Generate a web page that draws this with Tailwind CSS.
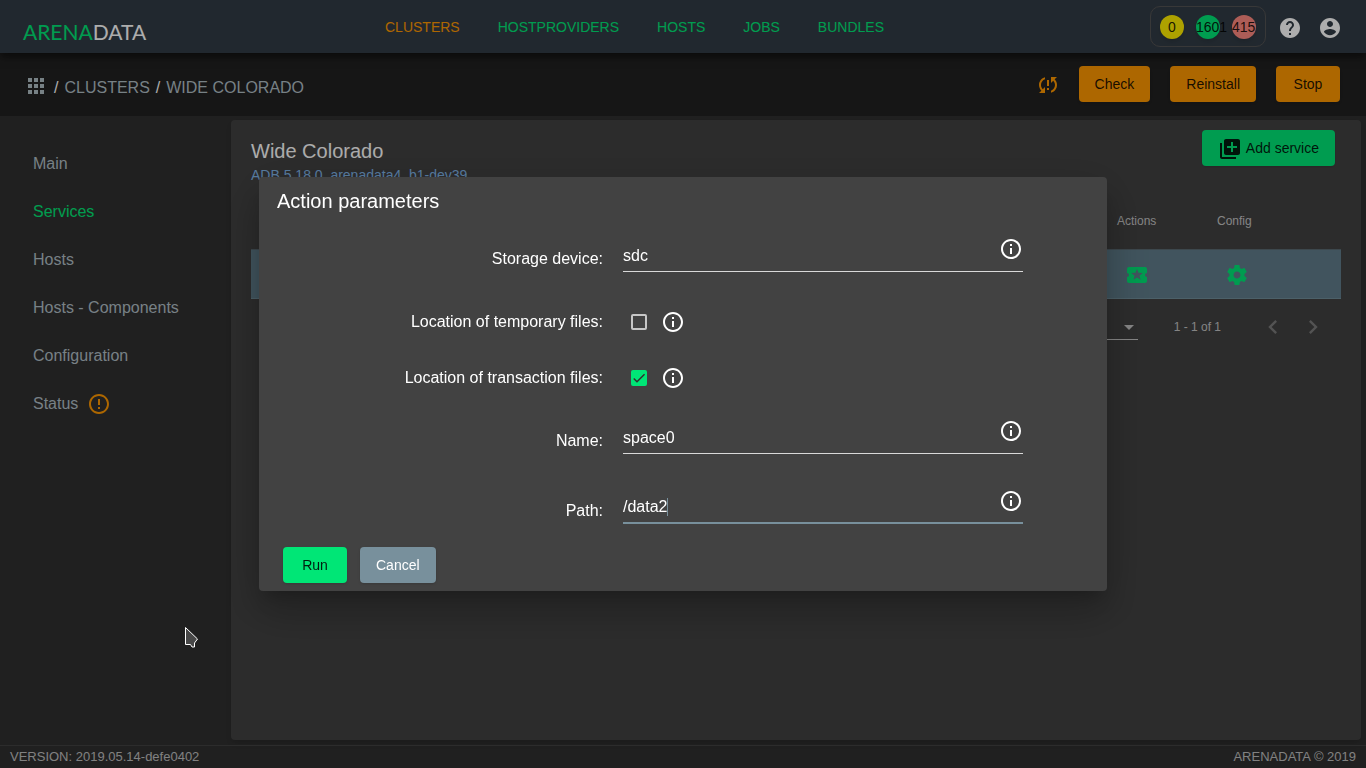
<!DOCTYPE html>
<html lang="en">
<head>
    <meta charset="UTF-8">
    <meta name="viewport" content="width=device-width, initial-scale=1.0">
    <script src="https://cdn.jsdelivr.net/npm/@tailwindcss/browser@4"></script>
    <title>Arenadata - Wide Colorado</title>
</head>

<body class="bg-[#303030] text-white font-['Liberation_Sans',Arial,sans-serif]">
    <!-- Icons used more than once -->
    <svg class="hidden">
        <symbol id="info" viewBox="0 0 24 24"><path d="M11 17h2v-6h-2v6zm1-15C6.48 2 2 6.48 2 12s4.48 10 10 10 10-4.48 10-10S17.52 2 12 2zm0 18c-4.41 0-8-3.59-8-8s3.59-8 8-8 8 3.59 8 8-3.59 8-8 8zM11 9h2V7h-2v2z"/></symbol>
    </svg>

    <!-- Page -->
    <div class="flex flex-col min-h-screen">
        <!-- Header -->
        <header class="relative z-10 flex items-center h-[53px] bg-[#323c46] shadow-[0_4px_8px_rgba(0,0,0,0.5)]">
            <div class="w-[385px] shrink-0 pl-[23px] pt-[14px]">
                <a href="#" class="text-[21px] leading-6 font-['Lato',sans-serif]"><span class="text-[#00e676]">ARENA</span><span>DATA</span></a>
            </div>
            <nav class="flex flex-1 gap-[38px] text-sm text-[#00e676]">
                <a href="#" class="text-[#ff9800]">CLUSTERS</a>
                <a href="#">HOSTPROVIDERS</a>
                <a href="#">HOSTS</a>
                <a href="#">JOBS</a>
                <a href="#">BUNDLES</a>
            </nav>
            <div class="flex items-center pr-6">
                <div class="flex gap-3 px-[9px] py-2 h-[41px] border border-[#535353] rounded-[10px] text-sm leading-6 text-black/87">
                    <a href="#" class="w-6 h-6 rounded-full text-center bg-[#ffee00] shadow-md">0</a>
                    <a href="#" class="w-6 h-6 rounded-full bg-[#00e676] shadow-md">1601</a>
                    <a href="#" class="w-6 h-6 rounded-full bg-[#ff8a80] shadow-md">415</a>
                </div>
                <button type="button" aria-label="Help" class="ml-3 mt-[2px]">
                    <svg class="w-6 h-6 fill-white" viewBox="0 0 24 24"><path d="M12 2C6.48 2 2 6.48 2 12s4.48 10 10 10 10-4.48 10-10S17.52 2 12 2zm1 17h-2v-2h2v2zm2.07-7.75l-.9.92C13.45 12.9 13 13.5 13 15h-2v-.5c0-1.1.45-2.1 1.17-2.83l1.24-1.26c.37-.36.59-.86.59-1.41 0-1.1-.9-2-2-2s-2 .9-2 2H8c0-2.21 1.79-4 4-4s4 1.79 4 4c0 .88-.36 1.68-.93 2.25z"/></svg>
                </button>
                <button type="button" aria-label="Account" class="ml-4 mt-[2px]">
                    <svg class="w-6 h-6 fill-white" viewBox="0 0 24 24"><path d="M12 2C6.48 2 2 6.48 2 12s4.48 10 10 10 10-4.48 10-10S17.52 2 12 2zm0 3c1.66 0 3 1.34 3 3s-1.34 3-3 3-3-1.34-3-3 1.34-3 3-3zm0 14.2c-2.5 0-4.71-1.28-6-3.22.03-1.99 4-3.08 6-3.08 1.99 0 5.97 1.09 6 3.08-1.29 1.94-3.5 3.22-6 3.22z"/></svg>
                </button>
            </div>
        </header>

        <!-- Breadcrumbs and cluster actions -->
        <div class="flex items-start h-[63px] pt-[13px] pl-6 pr-[26px] bg-[#212121]">
            <div class="flex flex-1 items-start pt-2 leading-[28px] text-[#b0bec5]">
                <a href="#" aria-label="Home"><svg class="w-6 h-6 fill-[#b0bec5]" viewBox="0 0 24 24"><path d="M4 8h4V4H4v4zm6 12h4v-4h-4v4zm-6 0h4v-4H4v4zm0-6h4v-4H4v4zm6 0h4v-4h-4v4zm6-10v4h4V4h-4zm-6 4h4V4h-4v4zm6 6h4v-4h-4v4zm0 6h4v-4h-4v4z"/></svg></a>
                <span class="mx-[6px] text-white">/</span>
                <a href="#">CLUSTERS</a>
                <span class="mx-[6px] text-white">/</span>
                <a href="#">WIDE COLORADO</a>
            </div>
            <div class="flex items-center text-sm text-black/87">
                <svg class="w-6 h-6 mr-[19px] mt-[2px] fill-[#ff9800]" viewBox="0 0 24 24"><path d="M3 12c0 2.21.91 4.2 2.36 5.64L3 20h6v-6l-2.24 2.24C5.68 15.15 5 13.66 5 12c0-2.61 1.67-4.83 4-5.65V4.26C5.55 5.15 3 8.27 3 12zm8 5h2v-2h-2v2zM21 4h-6v6l2.24-2.24C18.32 8.85 19 10.34 19 12c0 2.61-1.67 4.83-4 5.65v2.09c3.45-.89 6-4.01 6-7.74 0-2.21-.91-4.2-2.36-5.64L21 4zm-10 9h2V7h-2v6z"/></svg>
                <div class="flex gap-5">
                    <button type="button" class="h-9 px-4 rounded bg-[#ff9800] shadow">Check</button>
                    <button type="button" class="h-9 px-4 rounded bg-[#ff9800] shadow">Reinstall</button>
                    <button type="button" class="h-9 min-w-16 px-4 rounded bg-[#ff9800] shadow">Stop</button>
                </div>
            </div>
        </div>

        <!-- Content -->
        <div class="flex flex-1">
            <nav class="flex flex-col w-[231px] shrink-0 pt-6 pl-[33px] leading-[48px] text-[#b0bec5]">
                <a href="#">Main</a>
                <a href="#" class="text-[#00e676]">Services</a>
                <a href="#">Hosts</a>
                <a href="#">Hosts - Components</a>
                <a href="#">Configuration</a>
                <a href="#" class="flex items-center gap-[9px]">Status
                    <svg class="w-6 h-6 fill-[#ff9800]" viewBox="0 0 24 24"><path d="M11 15h2v2h-2zm0-8h2v6h-2zm.99-5C6.47 2 2 6.48 2 12s4.47 10 9.99 10C17.52 22 22 17.52 22 12S17.52 2 11.99 2zM12 20c-4.42 0-8-3.58-8-8s3.58-8 8-8 8 3.58 8 8-3.58 8-8 8z"/></svg>
                </a>
            </nav>

            <main class="flex-1 mt-1 mr-[5px] mb-[5px] px-5 rounded bg-[#424242] shadow-md">
                <div class="flex justify-between h-[73px] pt-[10px] pr-[6px]">
                    <div class="pt-2">
                        <h1 class="text-xl leading-[26px]">Wide Colorado</h1>
                        <a href="#" class="block text-sm leading-[22px] text-[#82b9ee]">ADB 5.18.0_arenadata4_b1-dev39</a>
                    </div>
                    <button type="button" class="flex items-center gap-1 h-9 px-4 rounded bg-[#00e676] shadow text-sm text-black/87">
                        <svg class="w-6 h-6 mt-[2px] fill-black/87" viewBox="0 0 24 24"><path d="M4 6H2v14c0 1.1.9 2 2 2h14v-2H4V6zm16-4H8c-1.1 0-2 .9-2 2v12c0 1.1.9 2 2 2h12c1.1 0 2-.9 2-2V4c0-1.1-.9-2-2-2zm-1 9h-4v4h-2v-4H9V9h4V5h2v4h4v2z"/></svg>
                        Add service
                    </button>
                </div>

                <table class="w-full table-fixed">
                    <thead>
                        <tr class="h-14 text-xs text-left text-white/70">
                            <th></th>
                            <th class="w-[100px] font-normal">Actions</th>
                            <th class="w-[124px] font-normal">Config</th>
                        </tr>
                    </thead>
                    <tbody>
                        <tr class="h-[49px] bg-[#607d8b] border-t border-b border-t-[#5a6a72] border-b-[#708e9a]">
                            <td></td>
                            <td class="pt-[2px]">
                                <button type="button" aria-label="Actions" class="flex px-2">
                                    <svg class="w-6 h-6 fill-[#00e676]" viewBox="0 0 24 24"><path d="M20 12c0-1.1.9-2 2-2V6c0-1.1-.9-2-2-2H4c-1.1 0-1.99.9-1.99 2v4c1.1 0 1.99.9 1.99 2s-.89 2-2 2v4c0 1.1.9 2 2 2h16c1.1 0 2-.9 2-2v-4c-1.1 0-2-.9-2-2zm-4.42 4.8L12 14.5l-3.58 2.3 1.08-4.12-3.29-2.69 4.24-.25L12 5.8l1.54 3.95 4.24.25-3.29 2.69 1.09 4.11z"/></svg>
                                </button>
                            </td>
                            <td class="pt-[2px]">
                                <button type="button" aria-label="Config" class="flex px-2">
                                    <svg class="w-6 h-6 fill-[#00e676]" viewBox="0 0 24 24"><path d="M19.43 12.98c.04-.32.07-.64.07-.98s-.03-.66-.07-.98l2.11-1.65c.19-.15.24-.42.12-.64l-2-3.46c-.12-.22-.39-.3-.61-.22l-2.49 1c-.52-.4-1.08-.73-1.69-.98l-.38-2.65C14.46 2.18 14.25 2 14 2h-4c-.25 0-.46.18-.49.42l-.38 2.65c-.61.25-1.17.59-1.69.98l-2.49-1c-.23-.09-.49 0-.61.22l-2 3.46c-.13.22-.07.49.12.64l2.11 1.65c-.04.32-.07.65-.07.98s.03.66.07.98l-2.11 1.65c-.19.15-.24.42-.12.64l2 3.46c.12.22.39.3.61.22l2.49-1c.52.4 1.08.73 1.69.98l.38 2.65c.03.24.24.42.49.42h4c.25 0 .46-.18.49-.42l.38-2.65c.61-.25 1.17-.59 1.69-.98l2.49 1c.23.09.49 0 .61-.22l2-3.46c.12-.22.07-.49-.12-.64l-2.11-1.65zM12 15.5c-1.93 0-3.5-1.57-3.5-3.5s1.57-3.5 3.5-3.5 3.5 1.57 3.5 3.5-1.57 3.5-3.5 3.5z"/></svg>
                                </button>
                            </td>
                        </tr>
                    </tbody>
                </table>

                <!-- Paginator -->
                <div class="flex items-center justify-end h-14 pr-[14px] text-xs text-white/70">
                    <div class="relative w-14 mr-9">
                        <select aria-label="Items per page" class="block w-full h-[26px] appearance-none border-b border-white/70"></select>
                        <svg class="absolute right-1 top-[11px] w-[10px] h-[5px] fill-white/70" viewBox="0 0 10 5"><path d="M0 0l5 5 5-5z"/></svg>
                    </div>
                    <span class="mr-[38px]">1 - 1 of 1</span>
                    <button type="button" aria-label="Previous page" class="mr-3"><svg class="w-7 h-7 fill-white/30" viewBox="0 0 24 24"><path d="M15.41 7.41L14 6l-6 6 6 6 1.41-1.41L10.83 12z"/></svg></button>
                    <button type="button" aria-label="Next page"><svg class="w-7 h-7 fill-white/30" viewBox="0 0 24 24"><path d="M10 6L8.59 7.41 13.17 12l-4.58 4.59L10 18l6-6z"/></svg></button>
                </div>
            </main>
        </div>

        <!-- Footer -->
        <footer class="flex items-center justify-between h-[23px] px-[10px] border-t border-[#424242] text-[13px] leading-5 text-white/70">
            <span>VERSION: 2019.05.14-defe0402</span>
            <span>ARENADATA © 2019</span>
        </footer>
    </div>

    <!-- Dialog -->
    <div class="fixed inset-0 z-20 flex items-center justify-center bg-black/32">
        <form role="dialog" aria-labelledby="title" class="w-[848px] max-w-full pt-[10px] pb-2 rounded bg-[#424242] shadow-[0_11px_15px_-7px_rgba(0,0,0,0.2),0_24px_38px_3px_rgba(0,0,0,0.14),0_9px_46px_8px_rgba(0,0,0,0.12)]">
            <h2 id="title" class="px-[18px] pb-[9px] text-xl leading-7">Action parameters</h2>

            <div class="grid grid-cols-[344px_400px] gap-x-5">
                <label for="device" class="text-right leading-[70px]">Storage device:</label>
                <div class="relative h-[70px] pt-[19px]">
                    <input id="device" type="text" value="sdc" class="block w-full h-[29px] pb-[3px] border-b border-white/80 outline-none">
                    <svg class="absolute right-0 top-[13px] w-6 h-6 fill-white"><use href="#info"/></svg>
                </div>

                <label for="temp" class="text-right leading-[56px]">Location of temporary files:</label>
                <div class="flex items-center gap-[14px] h-14 pl-2">
                    <input id="temp" type="checkbox" class="w-4 h-4 appearance-none rounded-[2px] border-2 border-white/70">
                    <svg class="w-6 h-6 fill-white"><use href="#info"/></svg>
                </div>

                <label for="transaction" class="text-right leading-[56px]">Location of transaction files:</label>
                <div class="flex items-center gap-[14px] h-14 pl-2">
                    <div class="relative w-4 h-4">
                        <input id="transaction" type="checkbox" checked class="block w-4 h-4 appearance-none rounded-[2px] bg-[#00e676]">
                        <svg class="absolute inset-0 w-4 h-4 fill-none stroke-[#303030] pointer-events-none" viewBox="0 0 24 24"><path stroke-width="2.2" d="M4.1 12.7L9 17.6 20.3 6.3"/></svg>
                    </div>
                    <svg class="w-6 h-6 fill-white"><use href="#info"/></svg>
                </div>

                <label for="name" class="text-right leading-[70px]">Name:</label>
                <div class="relative h-[70px] pt-[19px]">
                    <input id="name" type="text" value="space0" class="block w-full h-[29px] pb-[3px] border-b border-white/80 outline-none">
                    <svg class="absolute right-0 top-[13px] w-6 h-6 fill-white"><use href="#info"/></svg>
                </div>

                <label for="path" class="text-right leading-[70px]">Path:</label>
                <div class="relative h-[70px] pt-[19px]">
                    <input id="path" type="text" value="/data2" class="block w-full h-[29px] pb-[3px] border-b-2 border-[#78909c] outline-none">
                    <span class="absolute left-11 top-[22px] w-px h-[18px] bg-[#78909c]"></span>
                    <svg class="absolute right-0 top-[13px] w-6 h-6 fill-white"><use href="#info"/></svg>
                </div>
            </div>

            <div class="flex gap-[13px] pl-6 pt-px text-sm">
                <button type="submit" class="h-9 min-w-16 px-4 rounded bg-[#00e676] shadow text-black/87">Run</button>
                <button type="button" class="h-9 px-4 rounded bg-[#78909c] shadow">Cancel</button>
            </div>
        </form>
    </div>

    <!-- Mouse pointer -->
    <svg class="fixed z-30 left-[184px] top-[626px] w-4 h-6 fill-[#484848] stroke-white pointer-events-none" viewBox="0 0 16 24"><path d="M1.5 1.5v17h5l1.500 2.500 2.500 0v-4l3-4z"/></svg>
</body>
</html>
